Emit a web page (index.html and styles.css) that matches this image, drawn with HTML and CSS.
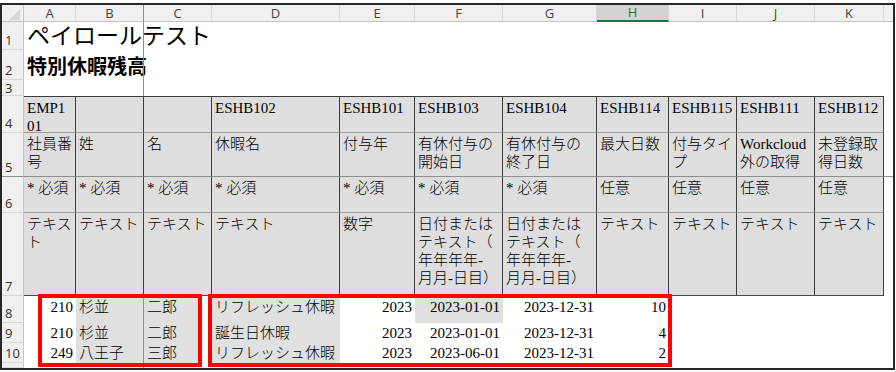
FILE: index.html
```html
<!DOCTYPE html>
<html lang="ja">
<head>
<meta charset="utf-8">
<title>ペイロールテスト</title>
<link rel="stylesheet" href="styles.css">
</head>
<body>
<div class="sheet">
  <div class="row colhead">
    <div class="corner"><svg width="21" height="16" viewBox="0 0 21 16"><polygon points="18,4 18,15 7,15" fill="#d8d8d8"/></svg></div>
    <div class="ch">A</div>
    <div class="ch fz">B</div>
    <div class="ch">C</div>
    <div class="ch">D</div>
    <div class="ch">E</div>
    <div class="ch">F</div>
    <div class="ch">G</div>
    <div class="ch sel">H</div>
    <div class="ch">I</div>
    <div class="ch">J</div>
    <div class="ch">K</div>
    <div class="ch end"></div>
  </div>

  <div class="row r1">
    <div class="rh">1</div>
    <div class="c title">ペイロールテスト</div>
    <div class="c fz"></div>
    <div class="c"></div><div class="c"></div><div class="c"></div><div class="c"></div><div class="c"></div>
    <div class="c"></div><div class="c"></div><div class="c"></div><div class="c"></div><div class="c"></div>
  </div>

  <div class="row r2">
    <div class="rh">2</div>
    <div class="c sub">特別休暇残高</div>
    <div class="c fz"></div>
    <div class="c"></div><div class="c"></div><div class="c"></div><div class="c"></div><div class="c"></div>
    <div class="c"></div><div class="c"></div><div class="c"></div><div class="c"></div><div class="c"></div>
  </div>

  <div class="row r3">
    <div class="rh">3</div>
    <div class="c"></div>
    <div class="c fz"></div>
    <div class="c"></div><div class="c"></div><div class="c"></div><div class="c"></div><div class="c"></div>
    <div class="c"></div><div class="c"></div><div class="c"></div><div class="c"></div><div class="c"></div>
  </div>

  <div class="row r4">
    <div class="rh">4</div>
    <div class="t">EMP1<br>01</div>
    <div class="t"></div>
    <div class="t"></div>
    <div class="t">ESHB102</div>
    <div class="t">ESHB101</div>
    <div class="t">ESHB103</div>
    <div class="t">ESHB104</div>
    <div class="t">ESHB114</div>
    <div class="t">ESHB115</div>
    <div class="t">ESHB111</div>
    <div class="t">ESHB112</div>
    <div class="c"></div>
  </div>

  <div class="row r5">
    <div class="rh">5</div>
    <div class="t">社員番<br>号</div>
    <div class="t">姓</div>
    <div class="t">名</div>
    <div class="t">休暇名</div>
    <div class="t">付与年</div>
    <div class="t">有休付与の<br>開始日</div>
    <div class="t">有休付与の<br>終了日</div>
    <div class="t">最大日数</div>
    <div class="t">付与タイ<br>プ</div>
    <div class="t">Workcloud<br>外の取得</div>
    <div class="t">未登録取<br>得日数</div>
    <div class="c"></div>
  </div>

  <div class="row r6">
    <div class="rh">6</div>
    <div class="t">* 必須</div>
    <div class="t">* 必須</div>
    <div class="t">* 必須</div>
    <div class="t">* 必須</div>
    <div class="t">* 必須</div>
    <div class="t">* 必須</div>
    <div class="t">* 必須</div>
    <div class="t">任意</div>
    <div class="t">任意</div>
    <div class="t">任意</div>
    <div class="t">任意</div>
    <div class="c"></div>
  </div>

  <div class="row r7">
    <div class="rh">7</div>
    <div class="t">テキス<br>ト</div>
    <div class="t">テキスト</div>
    <div class="t">テキスト</div>
    <div class="t">テキスト</div>
    <div class="t">数字</div>
    <div class="t">日付または<br>テキスト（<br>年年年年-<br>月月-日目）</div>
    <div class="t">日付または<br>テキスト（<br>年年年年-<br>月月-日目）</div>
    <div class="t">テキスト</div>
    <div class="t">テキスト</div>
    <div class="t">テキスト</div>
    <div class="t">テキスト</div>
    <div class="c"></div>
  </div>

  <div class="row r8">
    <div class="rh">8</div>
    <div class="d num">210</div>
    <div class="d g fz">杉並</div>
    <div class="d gc">二郎</div>
    <div class="d g">リフレッシュ休暇</div>
    <div class="d num">2023</div>
    <div class="d num g">2023-01-01</div>
    <div class="d num">2023-12-31</div>
    <div class="d num">10</div>
    <div class="d"></div><div class="d"></div><div class="d"></div><div class="d"></div>
  </div>

  <div class="row r9">
    <div class="rh">9</div>
    <div class="d num">210</div>
    <div class="d g fz">杉並</div>
    <div class="d gc">二郎</div>
    <div class="d g">誕生日休暇</div>
    <div class="d num">2023</div>
    <div class="d num">2023-01-01</div>
    <div class="d num">2023-12-31</div>
    <div class="d num">4</div>
    <div class="d"></div><div class="d"></div><div class="d"></div><div class="d"></div>
  </div>

  <div class="row r10">
    <div class="rh">10</div>
    <div class="d num">249</div>
    <div class="d g fz">八王子</div>
    <div class="d gc">三郎</div>
    <div class="d g">リフレッシュ休暇</div>
    <div class="d num">2023</div>
    <div class="d num">2023-06-01</div>
    <div class="d num">2023-12-31</div>
    <div class="d num">2</div>
    <div class="d"></div><div class="d"></div><div class="d"></div><div class="d"></div>
  </div>

  <div class="row rest">
    <div class="rh"></div>
    <div class="c"></div>
    <div class="c fz"></div>
    <div class="c"></div><div class="c"></div><div class="c"></div><div class="c"></div><div class="c"></div>
    <div class="c"></div><div class="c"></div><div class="c"></div><div class="c"></div><div class="c"></div>
  </div>

  <div class="mark mark-left"></div>
  <div class="mark mark-right"></div>
</div>
</body>
</html>
```

FILE: styles.css
```css
* { box-sizing: border-box; }

html, body {
  margin: 0;
  padding: 0;
  background: #fff;
}

body {
  padding-top: 3px;
}

.sheet {
  position: relative;
  width: 895px;
  height: 367px;
  border: 2px solid #262626;
  display: grid;
  grid-template-columns: 22px 52px 68px 68px 128px 75px 88px 94px 72px 68px 78px 69px 9px;
  grid-template-rows: 17px 28px 30px 16px 37px 44px 36px 83px 27px 20px 20px 5px;
  overflow: hidden;
  font-family: "Liberation Serif", "Noto Sans CJK JP", serif;
  font-size: 15px;
  font-weight: 300;
  line-height: 18px;
  color: #000;
}

.row { display: contents; }

/* headers */
.corner {
  background: #f0f0f0;
  border-right: 1px solid #c8c8c8;
  border-bottom: 1px solid #c4c4c4;
}
.corner svg { display: block; }

.ch {
  background: #f0f0f0;
  border-right: 1px solid #d6d6d6;
  border-bottom: 1px solid #c4c4c4;
  font-family: "Open Sans", "Liberation Sans", sans-serif;
  font-size: 13px;
  font-weight: 400;
  line-height: 1;
  color: #444;
  display: flex;
  align-items: center;
  justify-content: center;
}
.ch.sel {
  background: #d3d3d3;
  color: #1f6b40;
  border-bottom: 2px solid #217346;
}
.ch.end { border-right: none; }

.rh {
  background: #f0f0f0;
  border-right: 1px solid #c6c6c6;
  border-bottom: 1px solid #d9d9d9;
  font-family: "Open Sans", "Liberation Sans", sans-serif;
  font-size: 13px;
  font-weight: 400;
  line-height: 1;
  color: #333;
  display: flex;
  align-items: flex-end;
  padding: 0 0 2px 3px;
}
.r3 .rh {
  padding-bottom: 0;
}

/* plain cells */
.c {
  min-width: 0;
  white-space: nowrap;
}

/* freeze-pane line between B and C */
.fz { border-right: 1px solid #8e8e8e; }
.ch.fz { border-right-color: #8e8e8e; }

.title {
  font-family: "Liberation Serif", "Noto Sans CJK JP", serif;
  font-size: 23px;
  font-weight: 400;
  line-height: 28px;
  padding: 1px 0 0 3px;
  overflow: visible;
}

.sub {
  font-family: "Liberation Serif", "Noto Sans CJK JP", serif;
  font-size: 20px;
  font-weight: 700;
  line-height: 24px;
  padding: 5px 0 0 3px;
  overflow: visible;
}

/* header table */
.t {
  background: #dedede;
  border-right: 1px solid #3c3c3c;
  border-bottom: 1px solid #9c9c9c;
  padding: 2px 3px 0 3px;
  white-space: nowrap;
  overflow: hidden;
}
.r4 .t {
  border-top: 1px solid #3c3c3c;
}
.r7 .t {
  border-bottom-color: #4a4a4a;
}
.r5 .t,
.r5 .rh,
.r5 .c {
  border-bottom: 1px solid #8e8e8e;
}

/* data rows */
.d {
  display: flex;
  padding: 0 3px;
  white-space: nowrap;
}
.num { justify-content: flex-end; }
.g { background: #e0e0e0; }
.gc { background: linear-gradient(90deg, #e0e0e0 58px, #fff 58px); }

.r8 .d {
  align-items: flex-start;
  padding-top: 2px;
}
.r9 .d,
.r10 .d {
  align-items: flex-end;
  padding-bottom: 1px;
}

/* red highlight frames drawn over the sheet */
.mark {
  position: absolute;
  border: 4px solid #ff0000;
  pointer-events: none;
}
.mark-left {
  left: 36px;
  top: 289px;
  width: 164px;
  height: 73px;
}
.mark-right {
  left: 206px;
  top: 289px;
  width: 464px;
  height: 73px;
}
```
